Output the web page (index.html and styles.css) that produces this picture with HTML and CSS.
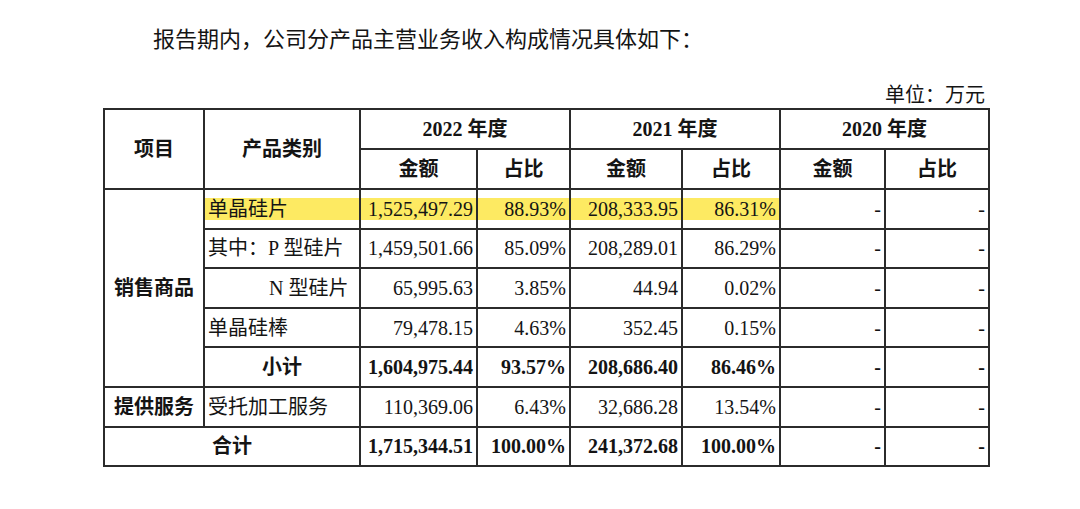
FILE: index.html
```html
<!DOCTYPE html>
<html lang="zh-CN">
<head>
<meta charset="utf-8">
<title>主营业务收入构成</title>
<link rel="stylesheet" href="styles.css">
</head>
<body>
<p class="intro">报告期内，公司分产品主营业务收入构成情况具体如下：</p>
<div class="wrap">
  <div class="unit">单位：万元</div>
  <table class="data">
    <colgroup>
      <col class="c1"><col class="c2"><col class="c3"><col class="c4">
      <col class="c5"><col class="c6"><col class="c7"><col class="c8">
    </colgroup>
    <thead>
      <tr class="hrow">
        <th rowspan="2">项目</th>
        <th rowspan="2">产品类别</th>
        <th colspan="2">2022 年度</th>
        <th colspan="2">2021 年度</th>
        <th colspan="2">2020 年度</th>
      </tr>
      <tr class="hrow">
        <th>金额</th><th>占比</th>
        <th>金额</th><th>占比</th>
        <th>金额</th><th>占比</th>
      </tr>
    </thead>
    <tbody>
      <tr>
        <th rowspan="5" class="group">销售商品</th>
        <td class="txt hl">单晶硅片</td>
        <td class="num hl">1,525,497.29</td>
        <td class="num hl">88.93%</td>
        <td class="num hl">208,333.95</td>
        <td class="num hl">86.31%</td>
        <td class="num">-</td>
        <td class="num">-</td>
      </tr>
      <tr>
        <td class="txt">其中：P 型硅片</td>
        <td class="num">1,459,501.66</td>
        <td class="num">85.09%</td>
        <td class="num">208,289.01</td>
        <td class="num">86.29%</td>
        <td class="num">-</td>
        <td class="num">-</td>
      </tr>
      <tr>
        <td class="txt indent">N 型硅片</td>
        <td class="num">65,995.63</td>
        <td class="num">3.85%</td>
        <td class="num">44.94</td>
        <td class="num">0.02%</td>
        <td class="num">-</td>
        <td class="num">-</td>
      </tr>
      <tr>
        <td class="txt">单晶硅棒</td>
        <td class="num">79,478.15</td>
        <td class="num">4.63%</td>
        <td class="num">352.45</td>
        <td class="num">0.15%</td>
        <td class="num">-</td>
        <td class="num">-</td>
      </tr>
      <tr class="bold">
        <td class="center">小计</td>
        <td class="num">1,604,975.44</td>
        <td class="num">93.57%</td>
        <td class="num">208,686.40</td>
        <td class="num">86.46%</td>
        <td class="num">-</td>
        <td class="num">-</td>
      </tr>
      <tr>
        <th class="group">提供服务</th>
        <td class="txt">受托加工服务</td>
        <td class="num">110,369.06</td>
        <td class="num">6.43%</td>
        <td class="num">32,686.28</td>
        <td class="num">13.54%</td>
        <td class="num">-</td>
        <td class="num">-</td>
      </tr>
      <tr class="bold">
        <td colspan="2" class="center">合计</td>
        <td class="num">1,715,344.51</td>
        <td class="num">100.00%</td>
        <td class="num">241,372.68</td>
        <td class="num">100.00%</td>
        <td class="num">-</td>
        <td class="num">-</td>
      </tr>
    </tbody>
  </table>
</div>
</body>
</html>
```

FILE: styles.css
```css
html, body {
  margin: 0;
  padding: 0;
  background: #ffffff;
}

body {
  font-family: "Liberation Serif", "Noto Sans CJK SC", serif;
  color: #141414;
}

.intro {
  margin: 0;
  padding: 25px 0 0 153px;
  font-size: 22px;
  line-height: 30px;
  height: 30px;
}

.wrap {
  margin: 28px 0 0 103px;
  width: 885px;
}

.unit {
  text-align: right;
  font-size: 20px;
  line-height: 24px;
  height: 24px;
  padding-right: 3px;
  margin-bottom: 1px;
}

.data {
  border-collapse: collapse;
  table-layout: fixed;
  width: 885px;
  font-size: 20px;
}

.c1 { width: 100px; }
.c2 { width: 156px; }
.c3 { width: 117px; }
.c4 { width: 93px; }
.c5 { width: 112px; }
.c6 { width: 98px; }
.c7 { width: 105px; }
.c8 { width: 104px; }

.data th,
.data td {
  border: 2px solid #2b2b2b;
  padding: 0 3px;
  line-height: 22px;
  white-space: nowrap;
  overflow: hidden;
}

.data th {
  font-weight: bold;
  text-align: center;
}

.hrow {
  height: 40px;
}

.data tbody tr {
  height: 39.6px;
}

.data th.group {
  padding: 0 2px;
  text-align: center;
}

.txt {
  text-align: left;
  padding-left: 2px;
}

.txt.indent {
  padding-left: 64px;
}

.num {
  text-align: right;
  padding-right: 3px;
}

.center {
  text-align: center;
}

.bold td {
  font-weight: bold;
}

.hl {
  background: linear-gradient(#fdea62, #fdea62) center / 100% 22px no-repeat;
}
```
